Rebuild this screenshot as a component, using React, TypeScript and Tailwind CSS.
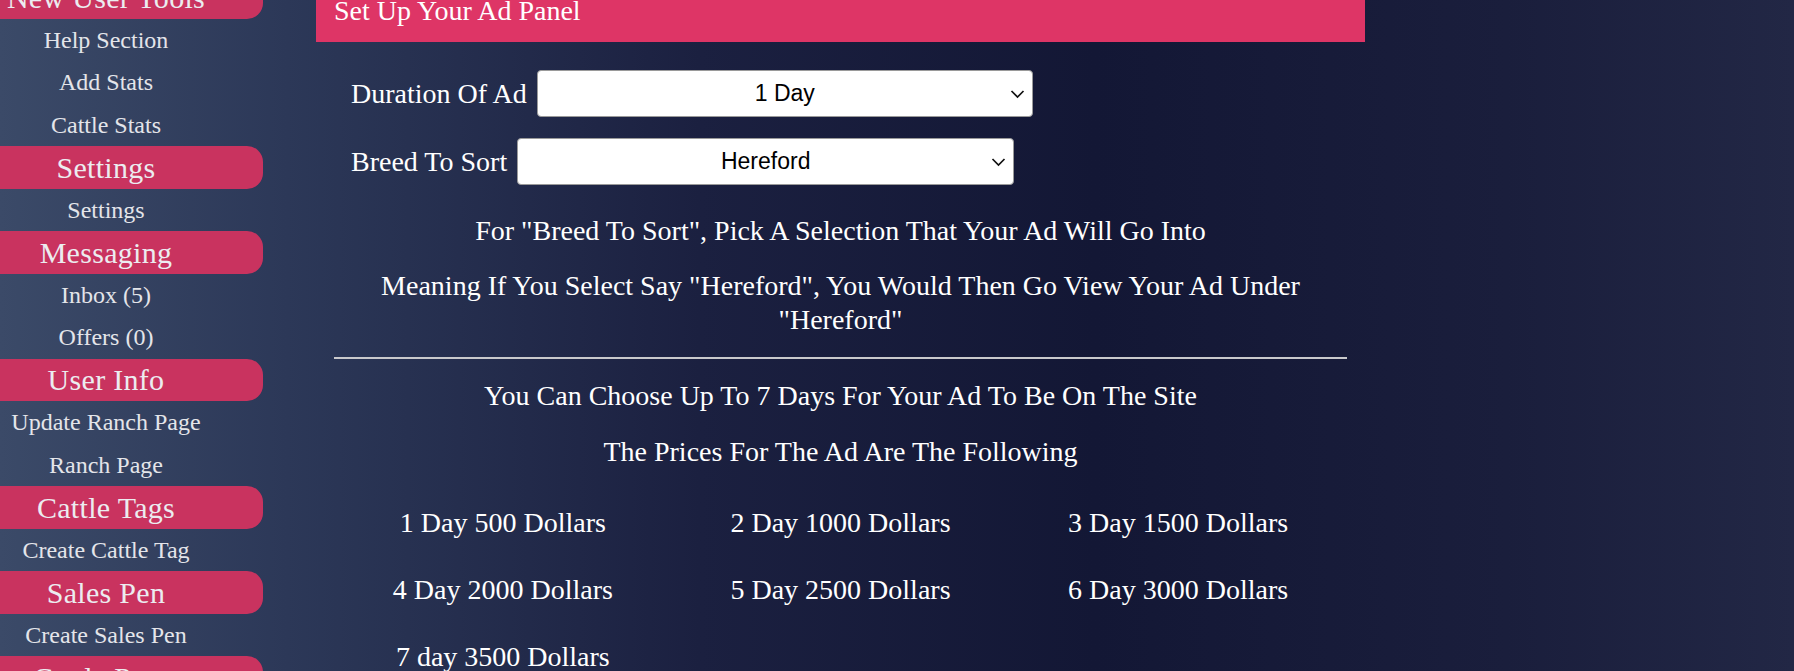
import React from 'react';

type NavEntry = { label: string; head?: boolean };

const nav: NavEntry[] = [
  { label: 'New User Tools', head: true },
  { label: 'Help Section' },
  { label: 'Add Stats' },
  { label: 'Cattle Stats' },
  { label: 'Settings', head: true },
  { label: 'Settings' },
  { label: 'Messaging', head: true },
  { label: 'Inbox (5)' },
  { label: 'Offers (0)' },
  { label: 'User Info', head: true },
  { label: 'Update Ranch Page' },
  { label: 'Ranch Page' },
  { label: 'Cattle Tags', head: true },
  { label: 'Create Cattle Tag' },
  { label: 'Sales Pen', head: true },
  { label: 'Create Sales Pen' },
  { label: 'Cattle Posts', head: true },
  { label: 'Create Post' },
];

const prices = [
  '1 Day 500 Dollars',
  '2 Day 1000 Dollars',
  '3 Day 1500 Dollars',
  '4 Day 2000 Dollars',
  '5 Day 2500 Dollars',
  '6 Day 3000 Dollars',
  '7 day 3500 Dollars',
];

const Chevron: React.FC = () => (
  <svg
    className="pointer-events-none absolute right-[8px] top-1/2 -translate-y-1/2"
    width="15"
    height="10"
    viewBox="0 0 15 10"
    fill="none"
  >
    <path d="M1.5 2 L7.5 8 L13.5 2" stroke="#111" strokeWidth="1.7" />
  </svg>
);

const Picker: React.FC<{ label: string; options: string[]; width: string }> = ({ label, options, width }) => (
  <div className="flex items-center gap-[10px] h-[47px] shrink-0">
    <label className="text-[28px] leading-[34px] text-white whitespace-nowrap">{label}</label>
    <div className={`relative h-[47px] ${width}`}>
      <select
        defaultValue={options[0]}
        className="h-full w-full appearance-none rounded-[4px] border border-[#9a9a9a] bg-white text-[23px] text-black [text-align-last:center] font-['Liberation_Sans',Arial,sans-serif]"
      >
        {options.map((o) => (
          <option key={o}>{o}</option>
        ))}
      </select>
      <Chevron />
    </div>
  </div>
);

export default function App() {
  return (
    <div className="flex items-start h-[671px] overflow-hidden bg-[linear-gradient(to_right,#3b4a68_0%,#2c3858_16%,#1b2040_39%,#131735_61%,#1a1e3c_84%,#222745_100%)] font-['Liberation_Serif','Times_New_Roman',serif]">
      {/* sidebar */}
      <aside className="w-[316px] shrink-0 -mt-[24px] flex flex-col">
        {nav.map((n, i) =>
          n.head ? (
            <div
              key={i}
              className="w-[263px] h-[42.5px] shrink-0 pr-[51px] flex items-center justify-center rounded-r-[16px] bg-[#c9335f] text-[30px] text-[#ececf0] tracking-[0.3px] whitespace-nowrap"
            >
              {n.label}
            </div>
          ) : (
            <div
              key={i}
              className="w-[212px] h-[42.5px] shrink-0 flex items-center justify-center text-[24px] text-[#e4e5ea] whitespace-nowrap"
            >
              {n.label}
            </div>
          )
        )}
      </aside>

      {/* ad panel */}
      <main className="w-[1049px] shrink-0 flex flex-col">
        <div className="h-[42px] shrink-0 bg-[#de3566] pl-[18px] overflow-hidden">
          <div className="-mt-[6px] text-[28px] leading-[34px] text-white">Set Up Your Ad Panel</div>
        </div>

        <div className="px-[18px] shrink-0 flex flex-col text-white">
          <div className="pl-[17px] mt-[28px] flex flex-col gap-[21px]">
            <Picker label="Duration Of Ad" options={['1 Day', '2 Day', '3 Day', '4 Day', '5 Day', '6 Day', '7 Day']} width="w-[496px]" />
            <Picker label="Breed To Sort" options={['Hereford', 'Angus', 'Charolais']} width="w-[497px]" />
          </div>

          <p className="mt-[29px] text-center text-[28px] leading-[34px]">
            For "Breed To Sort", Pick A Selection That Your Ad Will Go Into
          </p>
          <p className="mt-[21px] text-center text-[28px] leading-[34px]">
            Meaning If You Select Say "Hereford", You Would Then Go View Your Ad Under "Hereford"
          </p>

          <div className="mt-[20px] h-[2px] bg-[#c9c9cc]" />

          <p className="mt-[20px] text-center text-[28px] leading-[34px]">
            You Can Choose Up To 7 Days For Your Ad To Be On The Site
          </p>
          <p className="mt-[22px] text-center text-[28px] leading-[34px]">The Prices For The Ad Are The Following</p>

          <div className="mt-[37px] grid grid-cols-3 gap-y-[33px]">
            {prices.map((p) => (
              <div key={p} className="text-center text-[28px] leading-[34px] whitespace-nowrap">
                {p}
              </div>
            ))}
          </div>
        </div>
      </main>
    </div>
  );
}
